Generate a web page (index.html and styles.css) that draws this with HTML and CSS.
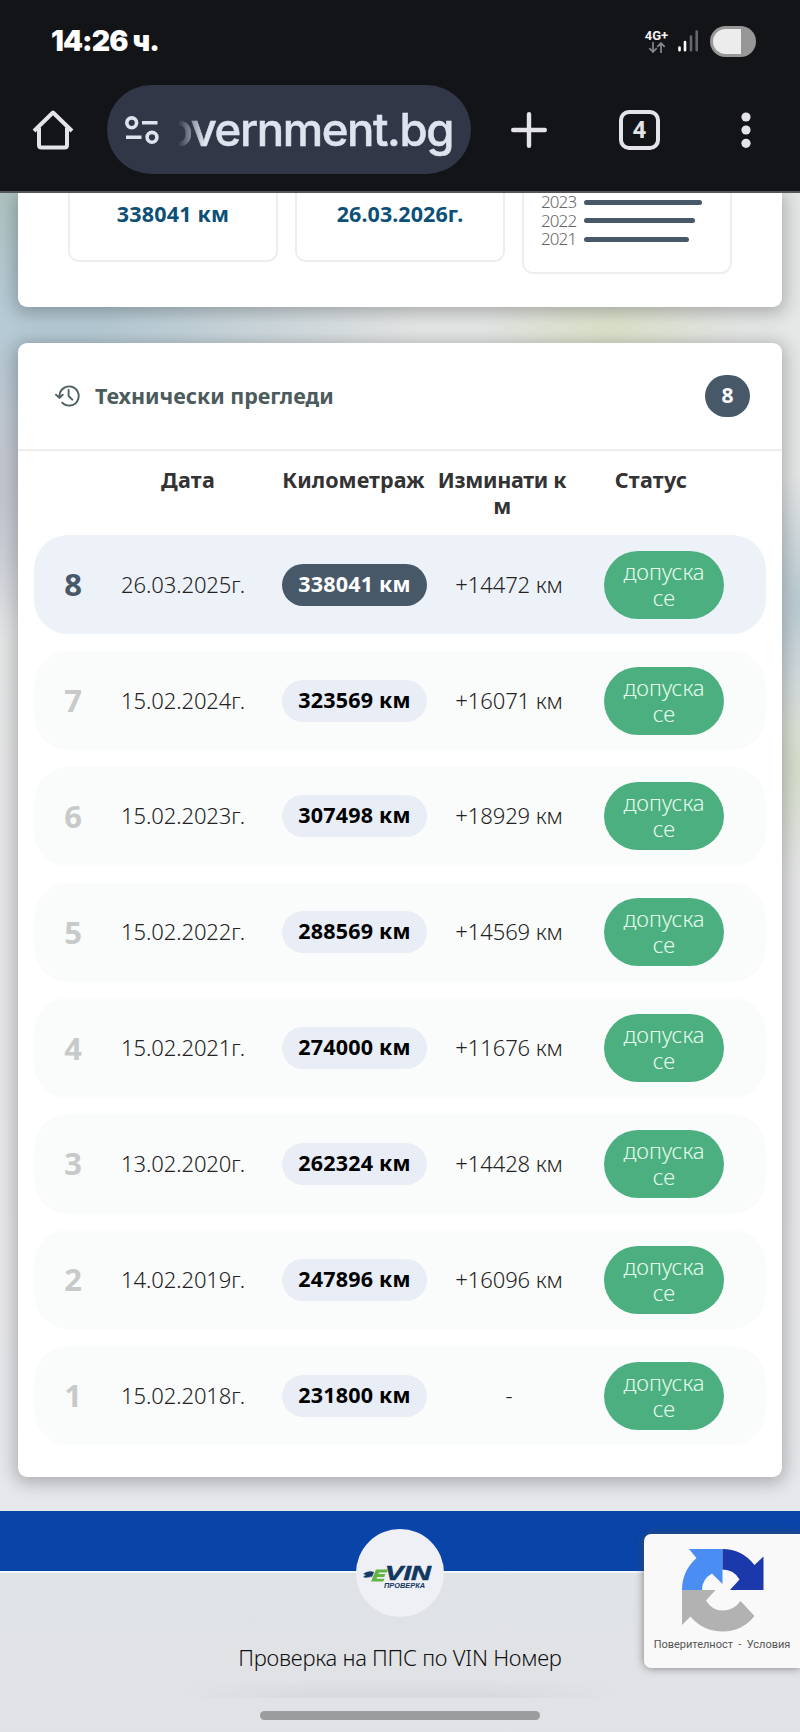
FILE: index.html
```html
<!DOCTYPE html>
<html lang="bg">
<head>
<meta charset="utf-8">
<title>Проверка на ППС</title>
<link rel="stylesheet" href="styles.css">
</head>
<body>
<header class="chrome">
  <div class="status">
    <span class="clock">14:26 ч.</span>
    <div class="signals">
      <div class="net"><span>4G+</span>
        <svg width="18" height="11" viewBox="0 0 18 11" fill="none" stroke="#85868a" stroke-width="1.7"><path d="M5 0v10M1.3 6.2 5 10l3.7-3.8M13 11V1M9.3 4.8 13 1l3.7 3.8"/></svg>
      </div>
      <svg class="bars" width="21" height="22" viewBox="0 0 21 22" stroke-width="2.6" stroke-linecap="round"><path d="M1.5 17.5v2.7M7 12v8.2" stroke="#fff"/><path d="M13 6.500v13.700M18.700 1.500v18.700" stroke="#66676a"/></svg>
      <span class="battery"><span class="charge"></span></span>
    </div>
  </div>
  <div class="toolbar">
    <svg class="home" width="42" height="42" viewBox="0 0 42 42" fill="none" stroke="#e4e4e8" stroke-width="4" stroke-linejoin="round"><path d="M2 22 21 3.500 40 22"/><path d="M7 18.500V36q0 2.500 2.500 2.500h23Q35 38.500 35 36V18.500"/></svg>
    <div class="omnibox">
      <svg width="34" height="28" viewBox="0 0 34 28" fill="none" stroke="#dfe3ee" stroke-width="3.600"><circle cx="6.700" cy="6.800" r="4.900"/><circle cx="27" cy="21.300" r="4.900"/><path d="M17 6.800h15.500M1 21.300h15.500"/></svg>
      <div class="url"><span>overnment.bg</span></div>
    </div>
    <svg class="plus" width="36" height="36" viewBox="0 0 36 36" stroke="#e4e4e8" stroke-width="4.400" stroke-linecap="round"><path d="M18 2.200v31.600M2.200 18h31.600"/></svg>
    <span class="tabs">4</span>
    <svg class="more" width="10" height="36" viewBox="0 0 10 36" fill="#e4e4e8"><circle cx="5" cy="5" r="4.600"/><circle cx="5" cy="18" r="4.600"/><circle cx="5" cy="31.300" r="4.600"/></svg>
  </div>
</header>

<main class="page">
  <section class="card summary">
    <div class="tile"><span class="mileage">338041 км</span></div>
    <div class="tile"><span class="due">26.03.2026г.</span></div>
    <div class="tile chart">
      <div class="year"><span>2023</span><i style="width:118px"></i></div>
      <div class="year"><span>2022</span><i style="width:111px"></i></div>
      <div class="year"><span>2021</span><i style="width:105px"></i></div>
    </div>
  </section>

  <section class="card history">
    <div class="title">
      <svg width="26" height="22" viewBox="0 0 26 22" fill="none" stroke="#4f5f64" stroke-width="1.900" stroke-linecap="round" stroke-linejoin="round"><path d="M4.500 12.500V11a9.600 9.600 0 1 1 2.700 6.700"/><path d="m1 9.700 3.500 3 3.200-3M13.600 5v6l3.700 3.700"/></svg>
      <h2>Технически прегледи</h2>
      <span class="count">8</span>
    </div>
    <div class="head"><span></span><span class="h-date">Дата</span><span class="h-km">Километраж</span><span class="h-delta">Изминати к<br>м</span><span class="h-status">Статус</span></div>
    <div class="rows">
      <div class="row latest"><b>8</b><span class="date">26.03.2025г.</span><span class="km">338041 км</span><span class="delta">+14472 км</span><span class="ok">допуска<br>се</span></div>
      <div class="row"><b>7</b><span class="date">15.02.2024г.</span><span class="km">323569 км</span><span class="delta">+16071 км</span><span class="ok">допуска<br>се</span></div>
      <div class="row"><b>6</b><span class="date">15.02.2023г.</span><span class="km">307498 км</span><span class="delta">+18929 км</span><span class="ok">допуска<br>се</span></div>
      <div class="row"><b>5</b><span class="date">15.02.2022г.</span><span class="km">288569 км</span><span class="delta">+14569 км</span><span class="ok">допуска<br>се</span></div>
      <div class="row"><b>4</b><span class="date">15.02.2021г.</span><span class="km">274000 км</span><span class="delta">+11676 км</span><span class="ok">допуска<br>се</span></div>
      <div class="row"><b>3</b><span class="date">13.02.2020г.</span><span class="km">262324 км</span><span class="delta">+14428 км</span><span class="ok">допуска<br>се</span></div>
      <div class="row"><b>2</b><span class="date">14.02.2019г.</span><span class="km">247896 км</span><span class="delta">+16096 км</span><span class="ok">допуска<br>се</span></div>
      <div class="row"><b>1</b><span class="date">15.02.2018г.</span><span class="km">231800 км</span><span class="delta">-</span><span class="ok">допуска<br>се</span></div>
    </div>
  </section>
</main>

<footer class="footer">
  <div class="band"></div>
  <div class="logo">
    <svg width="88" height="88" viewBox="0 0 88 88">
      <path d="M7 45q5-4 11-2l-2 5q-2-2-4 0t-5-1q2 0 3-1zM7 49l6-2 3 1" fill="#173a64"/>
      <path d="M20 40.500h12l-1.300 3H23l-.6 1.500h7l-1.200 3h-7l-.7 1.700h8l-1.300 2.800H15z" fill="#62b545"/>
      <text x="29" y="50.500" class="logo-vin" textLength="46" lengthAdjust="spacingAndGlyphs">VIN</text>
      <text x="28" y="58.500" class="logo-sub" textLength="41" lengthAdjust="spacingAndGlyphs">ПРОВЕРКА</text>
    </svg>
  </div>
  <p class="caption">Проверка на ППС по VIN Номер</p>
  <div class="fade"></div>
  <div class="gesture"></div>
  <aside class="captcha">
    <svg width="83" height="84" viewBox="0 0 83 84">
      <path d="M41.500 1v35L31 25.500Q21 31 21 42H1Q1 23 15.500 10L8 1z" fill="#4a8df3"/>
      <path d="M41.500 1Q61 1 73.500 17L82.500 8.500V42H49L58.500 31.500Q53 21.500 41.500 21.500z" fill="#1c39ac"/>
      <path d="M1 42h33.500L25 52.500Q31 62.500 41.500 62.500 53 62.500 59.500 53L73.500 68Q61 83.500 42 83.500 22 83.500 9.500 68.500L1 77z" fill="#b2b2b2"/>
    </svg>
    <span>Поверителност&nbsp; -&nbsp; Условия</span>
  </aside>
</footer>
</body>
</html>
```
FILE: styles.css
```css
* { box-sizing: border-box; }
body {
  margin: 0; width: 800px; height: 1732px; overflow: hidden;
  display: flex; flex-direction: column;
  font-family: "Noto Sans", "Open Sans", sans-serif; color: #333;
}
span, b { white-space: nowrap; }

.chrome { height: 193px; flex: none; background: #131418; border-bottom: 2px solid #55565a; }
.status { height: 82px; padding: 0 44px 0 51px; display: flex; align-items: center; justify-content: space-between; }
.clock { font: 900 28.5px/1 Inter, sans-serif; color: #fff; letter-spacing: -.9px; }
.signals { display: flex; align-items: center; }
.net { width: 25px; height: 24px; margin-right: 9px; display: flex; flex-direction: column; align-items: center; }
.net span { font: 700 13px/13px Roboto, sans-serif; color: #f2f2f2; }
.bars { margin-right: 11px; }
.battery { width: 46px; height: 31px; border-radius: 16px; background: #979797; padding: 3px; overflow: hidden; }
.charge { display: block; width: 28px; height: 25px; border-radius: 13px 0 0 13px; background: #ececec; }
.toolbar { height: 95px; padding: 0 48px 0 32px; display: flex; align-items: center; }
.omnibox { width: 364px; height: 89px; margin-left: 33px; padding: 0 18px; border-radius: 45px; background: #313747; display: flex; align-items: center; justify-content: space-between; }
.url { width: 275px; height: 66px; display: flex; justify-content: flex-end; overflow: hidden; -webkit-mask-image: linear-gradient(90deg, transparent 0, #000 26px); mask-image: linear-gradient(90deg, transparent 0, #000 26px); }
.url span { font: 500 45.500px/65px Inter, sans-serif; letter-spacing: -1.400px; color: #dfe3ee; -webkit-text-stroke: .5px #dfe3ee; }
.plus { margin-left: 40px; }
.tabs { width: 41px; height: 40px; margin-left: 72px; border: 4px solid #e4e4e8; border-radius: 10px; font: 700 24px/32px Roboto, sans-serif; text-align: center; color: #e4e4e8; }
.more { margin-left: 81px; margin-right: auto; }

.page {
  height: 1318px; flex: none; padding: 0 18px; overflow: hidden;
  background:
    radial-gradient(ellipse 130px 60px at 610px 135px, #dce3ca, transparent),
    radial-gradient(ellipse 60px 130px at 800px 410px, #b9cbd3, transparent),
    radial-gradient(ellipse 60px 110px at 800px 575px, #d5decb, transparent),
    radial-gradient(ellipse 60px 100px at 0 0, #aec3c0, transparent),
    radial-gradient(ellipse 40px 160px at 0 290px, #c3c4cf, transparent),
    radial-gradient(ellipse 420px 330px at 0 100px, #b5cad4 25%, transparent),
    linear-gradient(#e5e7e6, #e6e6e8 60%, #e7e8ec);
}
.card { background: #fff; box-shadow: 0 3px 18px 3px rgba(0, 0, 0, .26); border-radius: 0 0 9px 9px; }
.summary { height: 114px; padding: 0 50px; display: flex; justify-content: space-between; align-items: flex-start; }
.tile { width: 210px; height: 69px; border: 2px solid #eee; border-top: 0; border-radius: 0 0 11px 11px; text-align: center; }
.tile > span { font-weight: 700; font-size: 21.500px; line-height: 41px; color: #0c5077; letter-spacing: .2px; }
.tile .due { letter-spacing: .05px; }
.chart { height: 81px; padding: 0 17px; }
.year { height: 18.500px; display: flex; align-items: center; gap: 8px; }
.year span { width: 35px; font-weight: 350; font-size: 17px; line-height: 18px; color: #666; letter-spacing: -.9px; }
.year i { height: 5px; border-radius: 3px; background: #475868; }

.history { height: 1134px; margin-top: 36px; border-radius: 9px; padding-top: 1px; }
.title { height: 107px; border-bottom: 2px solid #ededee; padding: 0 32px 2px 37px; display: flex; align-items: center; }
h2 { margin: 0 auto 0 14px; font-size: 21.500px; color: #4c5b5c; letter-spacing: -.03px; }
.count { width: 45px; height: 42px; border-radius: 21px; background: #475868; color: #fff; font: 700 21px/41px "Noto Sans", sans-serif; text-align: center; }
.head { height: 84px; padding: 16px 16px 0; display: grid; grid-template-columns: 64px 180px 151px 146px 152px; font-weight: 700; font-size: 21.500px; line-height: 26px; text-align: center; }
.h-km { letter-spacing: .05px; }
.h-delta { letter-spacing: -.3px; }
.h-date, .h-status { letter-spacing: .25px; }
.rows { padding: 0 16px; display: grid; gap: 16.500px; }
.row { height: 99.350px; border-radius: 34px; background: #fafcfb; display: grid; grid-template-columns: 78px 142px 201px 108px 202px; align-items: center; justify-items: center; font-size: 22px; }
.row b { font-size: 31px; line-height: 40px; padding-bottom: 1px; color: #c8caca; }
.date, .delta { font-weight: 350; color: #222; padding-bottom: 2px; }
.date { letter-spacing: -.1px; }
.delta { letter-spacing: -.1px; }
.km { width: 145px; height: 42px; border-radius: 21px; background: #e8edf6; color: #000; font-weight: 700; font-size: 21.500px; line-height: 40px; letter-spacing: .2px; text-align: center; }
.ok { width: 120px; height: 68px; border-radius: 34px; background: #4caf80; color: #e5fbec; font-weight: 350; font-size: 22px; line-height: 26px; text-align: center; padding-top: 7px; }
.latest { background: #edf1f8; }
.latest b { color: #475868; }
.latest .km { background: #475868; color: #fff; }

.footer { position: relative; height: 221px; flex: none; background: linear-gradient(#dfe4e6, #e1e2e6); display: flex; flex-direction: column; align-items: center; }
.band { width: 100%; height: 62px; background: #0944a8; border-bottom: 2px solid #f1f7fc; }
.logo { height: 88px; width: 88px; margin-top: -44px; border-radius: 50%; background: #eef0f5; }
.logo svg { display: block; }
.logo-vin { font: italic 700 21px "Liberation Sans", sans-serif; fill: #123761; stroke: #123761; stroke-width: .6px; }
.logo-sub { font: italic 700 7px "Liberation Sans", sans-serif; fill: #123761; }
.caption { margin: 24px 0 0; height: 34px; font-size: 22px; line-height: 32px; font-weight: 350; letter-spacing: -.25px; color: #111; white-space: nowrap; }
.fade { width: 430px; height: 20px; margin-top: 3px; background: linear-gradient(transparent, rgba(110, 125, 130, .09)); -webkit-mask-image: linear-gradient(90deg, transparent, #000 30%, #000 70%, transparent); mask-image: linear-gradient(90deg, transparent, #000 30%, #000 70%, transparent); }
.gesture { width: 280px; height: 9px; margin-top: 13px; border-radius: 5px; background: #9b9c9e; }
.captcha { position: absolute; right: 0; top: 23px; width: 156px; height: 134px; border-radius: 7px 0 0 7px; background: #f9f9f9; box-shadow: 0 0 8px rgba(80, 80, 80, .7); display: flex; flex-direction: column; align-items: center; padding-top: 14px; }
.captcha span { margin-top: 6px; font: 400 11px/14px Roboto, sans-serif; color: #555; letter-spacing: -.02px; }
```
